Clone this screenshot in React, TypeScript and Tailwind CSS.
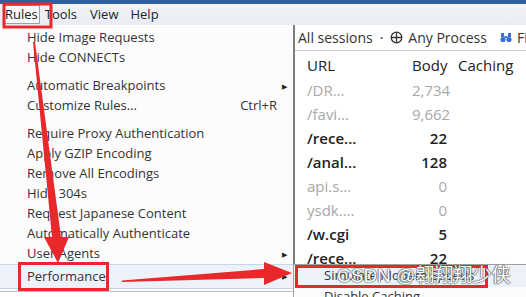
import React from "react";

type MenuEntry =
  | { kind: "sep" }
  | { kind: "item"; label: string; shortcut?: string; sub?: boolean; active?: boolean };

const menu: MenuEntry[] = [
  { kind: "item", label: "Hide Image Requests" },
  { kind: "item", label: "Hide CONNECTs" },
  { kind: "sep" },
  { kind: "item", label: "Automatic Breakpoints", sub: true },
  { kind: "item", label: "Customize Rules...", shortcut: "Ctrl+R" },
  { kind: "sep" },
  { kind: "item", label: "Require Proxy Authentication" },
  { kind: "item", label: "Apply GZIP Encoding" },
  { kind: "item", label: "Remove All Encodings" },
  { kind: "item", label: "Hide 304s" },
  { kind: "item", label: "Request Japanese Content" },
  { kind: "item", label: "Automatically Authenticate" },
  { kind: "item", label: "User Agents", sub: true },
  { kind: "item", label: "Performance", sub: true, active: true },
];

const sessions = [
  { url: "/DR...", body: "2,734", dim: true },
  { url: "/favi...", body: "9,662", dim: true },
  { url: "/rece...", body: "22", dim: false },
  { url: "/anal...", body: "128", dim: false },
  { url: "api.s...", body: "0", dim: true },
  { url: "ysdk....", body: "0", dim: true },
  { url: "/w.cgi", body: "5", dim: false },
  { url: "/rece...", body: "22", dim: false },
];

function Arrow() {
  return <span className="ml-auto mr-[6px] text-[7px] leading-none text-[#222]">▶</span>;
}

function MenuItem({ entry }: { entry: Extract<MenuEntry, { kind: "item" }> }) {
  return (
    <div
      className={
        entry.active
          ? "flex h-[25px] items-center border-y border-[#c9d6e8] bg-[#edf2fa] pl-[27px]"
          : "flex h-[20px] items-center pl-[27px]"
      }
    >
      <span>{entry.label}</span>
      {entry.shortcut ? <span className="ml-auto mr-[16px]">{entry.shortcut}</span> : null}
      {entry.sub ? <Arrow /> : null}
    </div>
  );
}

function RulesMenu() {
  return (
    <div className="w-[295px] shrink-0 border-r-2 border-[#7d7d7d] bg-[#fcfcfc] pt-[3px] text-[13px] text-[#333]">
      {menu.map((entry, i) =>
        entry.kind === "sep" ? (
          <div key={i} className="h-[8px]" />
        ) : (
          <MenuItem key={i} entry={entry} />
        ),
      )}
      <div className="mt-[2px] border-t border-[#bdbdbd]" />
    </div>
  );
}

function SessionList() {
  return (
    <div className="min-w-0 flex-1 overflow-hidden bg-white text-[#222]">
      <div className="flex h-[26px] items-center gap-[5px] overflow-hidden whitespace-nowrap border-b border-[#c8c8c8] pl-[3px] text-[14px] text-[#333]">
        <span className="shrink-0">All sessions</span>
        <span className="shrink-0 px-[2px]">·</span>
        <svg width="13" height="13" viewBox="0 0 13 13" className="shrink-0">
          <circle cx="6.5" cy="6.5" r="5.3" fill="none" stroke="#333" strokeWidth="1.3" />
          <path d="M6.5 1.5v10M1.5 6.5h10" stroke="#333" strokeWidth="1.3" />
        </svg>
        <span className="shrink-0">Any Process</span>
        <svg width="12" height="11" viewBox="0 0 12 11" className="ml-[8px] shrink-0">
          <rect x="1" y="1" width="3" height="4" fill="#3a6fd8" />
          <rect x="8" y="1" width="3" height="4" fill="#3a6fd8" />
          <circle cx="3" cy="7.5" r="2.6" fill="#3a6fd8" />
          <circle cx="9" cy="7.5" r="2.6" fill="#3a6fd8" />
          <rect x="4.5" y="4" width="3" height="2" fill="#3a6fd8" />
        </svg>
        <span className="shrink-0">Fi</span>
      </div>
      <div className="flex h-[27px] items-center whitespace-nowrap pl-[12px] pt-[2px] text-[15px]">
        <span className="w-[105px] shrink-0">URL</span>
        <span className="w-[35px] shrink-0 text-right">Body</span>
        <span className="ml-[11px] shrink-0">Caching</span>
      </div>
      {sessions.map((s, i) => (
        <div
          key={i}
          className={
            s.dim
              ? "flex h-[24px] items-center pl-[12px] text-[15px] text-[#a8a8a8]"
              : "flex h-[24px] items-center pl-[12px] text-[15px] font-semibold text-[#222]"
          }
        >
          <span className="w-[105px]">{s.url}</span>
          <span className="w-[35px] text-right">{s.body}</span>
        </div>
      ))}
    </div>
  );
}

export default function App() {
  return (
    <div className="relative h-[297px] w-[526px] overflow-hidden bg-white font-['Open_Sans',sans-serif]">
      <div className="h-[4px] bg-[#2f5f9e]" />
      <div className="flex h-[21px] items-center bg-gradient-to-b from-[#f2f3f5] to-[#e9ecf6] text-[13px] text-[#222]">
        <span className="ml-[3px] border border-[#9aa3ad] bg-[#f7f8fa] px-[1px] leading-[17px]">Rules</span>
        <span className="ml-[3px] px-[2px]">Tools</span>
        <span className="ml-[9px] px-[2px]">View</span>
        <span className="ml-[8px] px-[2px]">Help</span>
      </div>

      <div className="flex">
        <RulesMenu />
        <SessionList />
      </div>

      <div className="absolute left-[293px] top-[264px] w-[240px] border border-[#a0a0a0] bg-[#fcfcfc] text-[13px] text-[#333]">
        <div className="flex h-[22px] items-center bg-[#edf2fa] pl-[30px]">Simulate Modem Speeds</div>
        <div className="flex h-[20px] items-center pl-[30px]">Disable Caching</div>
      </div>

      <svg className="pointer-events-none absolute inset-0" width="526" height="297" viewBox="0 0 526 297">
        <rect x="4" y="4" width="47" height="23" fill="none" stroke="#e8282a" strokeWidth="3" />
        <rect x="19.5" y="263.5" width="88" height="26" fill="none" stroke="#e8282a" strokeWidth="3" />
        <rect x="296.5" y="266.5" width="190" height="20" fill="none" stroke="#e8282a" strokeWidth="3" />
        <polygon points="33,42 35,42 61,237 69,237 58,263 44,237 52,237" fill="#e8282a" />
        <polygon points="122,280.5 122,282 264,278 264,285 292,273 264,262 264,269" fill="#e8282a" />
      </svg>

      <div className="pointer-events-none absolute left-[337px] top-[262px] text-[19px] leading-[28px] text-white [text-shadow:0_0_1px_#444,0_0_1px_#444,0_0_2px_#666] font-['Liberation_Sans','Noto_Sans_CJK_SC',sans-serif]">
        CSDN @翱翔翔少侠
      </div>
    </div>
  );
}
